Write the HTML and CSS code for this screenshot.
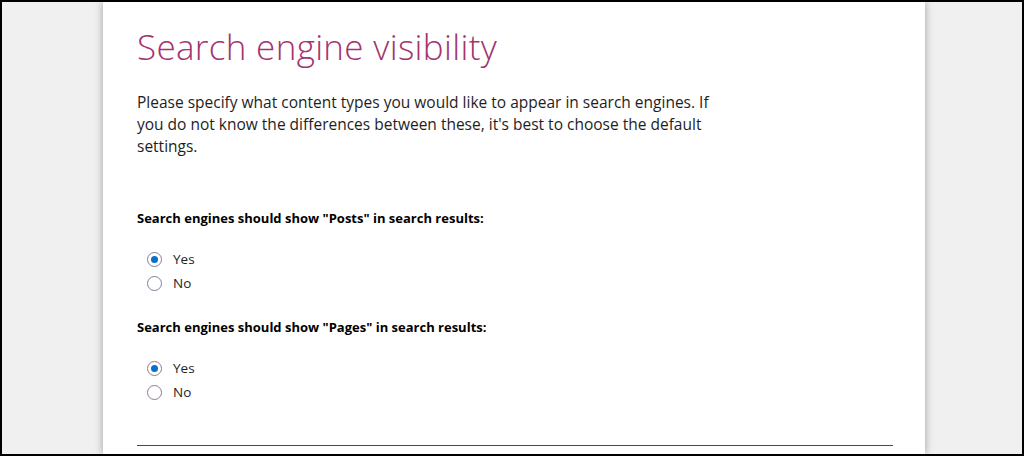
FILE: index.html
```html
<!DOCTYPE html>
<html>
<head>
	<title>Search engine visibility</title>
	<meta charset="utf-8">
	<link rel="stylesheet" href="styles.css">
</head>
<body>
<div id="frame">
	<div id="card">
		<h1>Search engine visibility</h1>
		<p class="intro">Please specify what content types you would like to appear in search engines. If you do not know the differences between these, it's best to choose the default settings.</p>

		<div class="question">
			<div class="label">Search engines should show "Posts" in search results:</div>
			<label class="opt"><input type="radio" name="posts" checked> Yes</label>
			<label class="opt"><input type="radio" name="posts"> No</label>
		</div>

		<div class="question">
			<div class="label">Search engines should show "Pages" in search results:</div>
			<label class="opt"><input type="radio" name="pages" checked> Yes</label>
			<label class="opt"><input type="radio" name="pages"> No</label>
		</div>

		<hr>
	</div>
</div>
</body>
</html>
```

FILE: styles.css
```css
html, body {
	margin:0;
	padding:0;
	height:100%;
}
body {
	font-family: "Open Sans", "DejaVu Sans", sans-serif;
	color:#1e1e1e;
}
#frame {
	box-sizing: border-box;
	height:456px;
	border:2px solid #000;
	background-color:#f0f0f0;
	display:flex;
	justify-content:center;
	padding-left:4px;
	overflow:hidden;
}
#card {
	width:822px;
	box-sizing:border-box;
	background:#fff;
	padding:22px 32px 0 34px;
	box-shadow: 0 0 8px rgba(0,0,0,0.35);
}
#card h1 {
	font-weight:300;
	font-size:35px;
	color:#a3346f;
	margin:0;
	line-height:46px;
	letter-spacing:0.32px;
}
.intro {
	font-size:15.5px;
	line-height:22px;
	width:580px;
	margin:21px 0 0 0;
}
.question {
	margin-top:52px;
}
.question + .question {
	margin-top:23px;
}
.label {
	font-weight:bold;
	font-size:13px;
	color:#000;
	margin-bottom:20px;
}
.opt {
	display:flex;
	align-items:center;
	gap:11px;
	font-size:13.5px;
	height:24px;
	padding-left:10px;
}
.opt input {
	appearance:none;
	-webkit-appearance:none;
	margin:0;
	width:15px;
	height:15px;
	border:1px solid #8c7a99;
	border-radius:50%;
	display:grid;
	place-content:center;
	background:#fff;
}
.opt input:checked::before {
	content:"";
	width:7px;
	height:7px;
	border-radius:50%;
	background:#0a6fc8;
}
hr {
	border:none;
	border-top:1px solid #6e3557;
	margin:41px 0 0 0;
}
```
